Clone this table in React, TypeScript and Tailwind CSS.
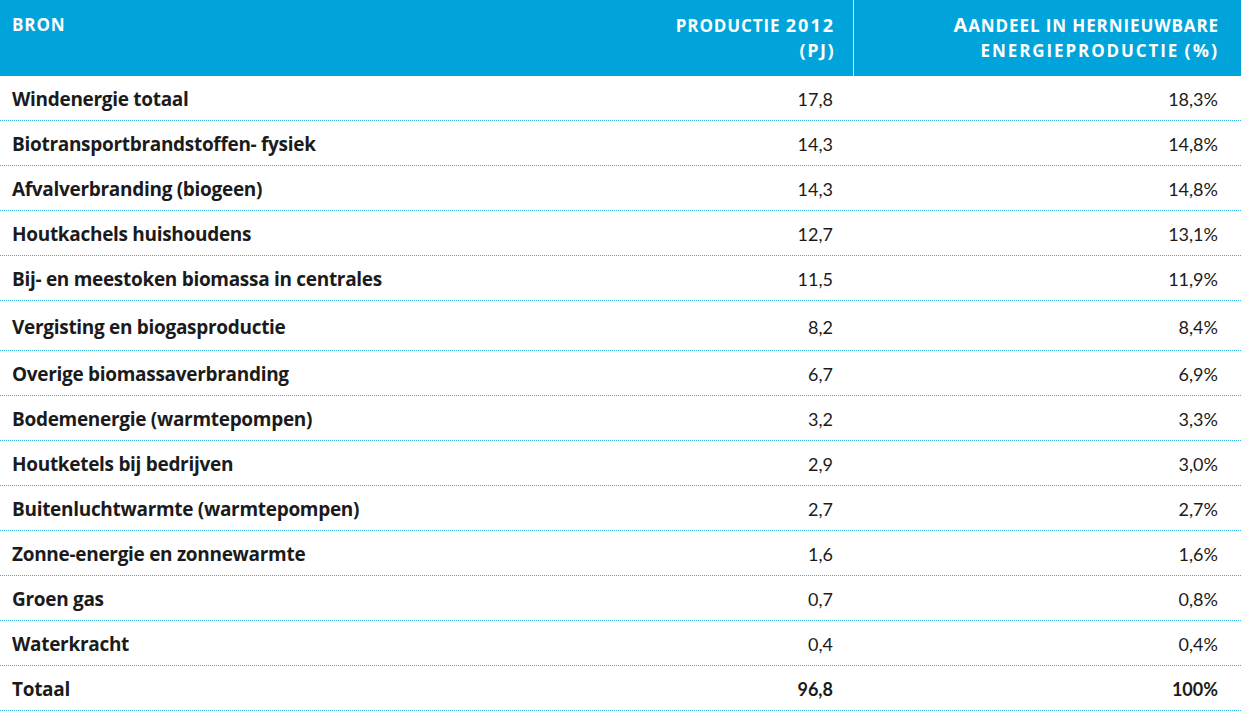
import React from "react";

const rows: [string, string, string][] = [
  ["Windenergie totaal", "17,8", "18,3%"],
  ["Biotransportbrandstoffen- fysiek", "14,3", "14,8%"],
  ["Afvalverbranding (biogeen)", "14,3", "14,8%"],
  ["Houtkachels huishoudens", "12,7", "13,1%"],
  ["Bij- en meestoken biomassa in centrales", "11,5", "11,9%"],
  ["Vergisting en biogasproductie", "8,2", "8,4%"],
  ["Overige biomassaverbranding", "6,7", "6,9%"],
  ["Bodemenergie (warmtepompen)", "3,2", "3,3%"],
  ["Houtketels bij bedrijven", "2,9", "3,0%"],
  ["Buitenluchtwarmte (warmtepompen)", "2,7", "2,7%"],
  ["Zonne-energie en zonnewarmte", "1,6", "1,6%"],
  ["Groen gas", "0,7", "0,8%"],
  ["Waterkracht", "0,4", "0,4%"],
];

export default function App() {
  return (
    <div className="w-[1241px] h-[719px] bg-white overflow-hidden font-['Lato',sans-serif] text-[#1b1b1b]">
      <div className="grid grid-cols-[853px_1fr] h-[76px] bg-[#00a4da] text-white font-bold text-[17px] leading-[24px] tracking-[0.9px] font-['Open_Sans',sans-serif]">
        <div className="grid grid-cols-[600px_1fr] pt-[13px]">
          <div className="pl-[12px]">BRON</div>
          <div className="text-right pr-[18px]">
            PRODUCTIE <span className="text-[18px] tracking-[2px]">2012</span>
            <br />
            <span className="text-[18px] tracking-[1.5px]">(PJ)</span>
          </div>
        </div>
        <div className="border-l border-white/80 text-right pr-[22px] pt-[13px]">
          <span className="text-[20px]">A</span>ANDEEL IN HERNIEUWBARE
          <br />
          <span className="tracking-[1.9px]">ENERGIEPRODUCTIE</span> <span className="text-[18px] tracking-[2px]">(%)</span>
        </div>
      </div>
      {rows.map(([name, a, b], i) => (
        <div
          key={name}
          className={
            "grid grid-cols-[600px_253px_1fr] items-center border-b border-dotted border-[#2fb0dd] pt-[3px] " +
            (i === 5 ? "h-[50px]" : "h-[45px]")
          }
        >
          <div className="pl-[12px] font-bold text-[19px] font-['Open_Sans',sans-serif] tracking-[-0.3px]">{name}</div>
          <div className="text-right pr-[20px] text-[18px]">{a}</div>
          <div className="text-right pr-[23px] text-[18px]">{b}</div>
        </div>
      ))}
      <div className="grid grid-cols-[600px_253px_1fr] items-center border-b border-dotted border-[#2fb0dd] h-[45px] pt-[3px] font-bold">
        <div className="pl-[12px] text-[19px] font-['Open_Sans',sans-serif] tracking-[-0.3px]">Totaal</div>
        <div className="text-right pr-[20px] text-[18px]">96,8</div>
        <div className="text-right pr-[23px] text-[18px]">100%</div>
      </div>
    </div>
  );
}
